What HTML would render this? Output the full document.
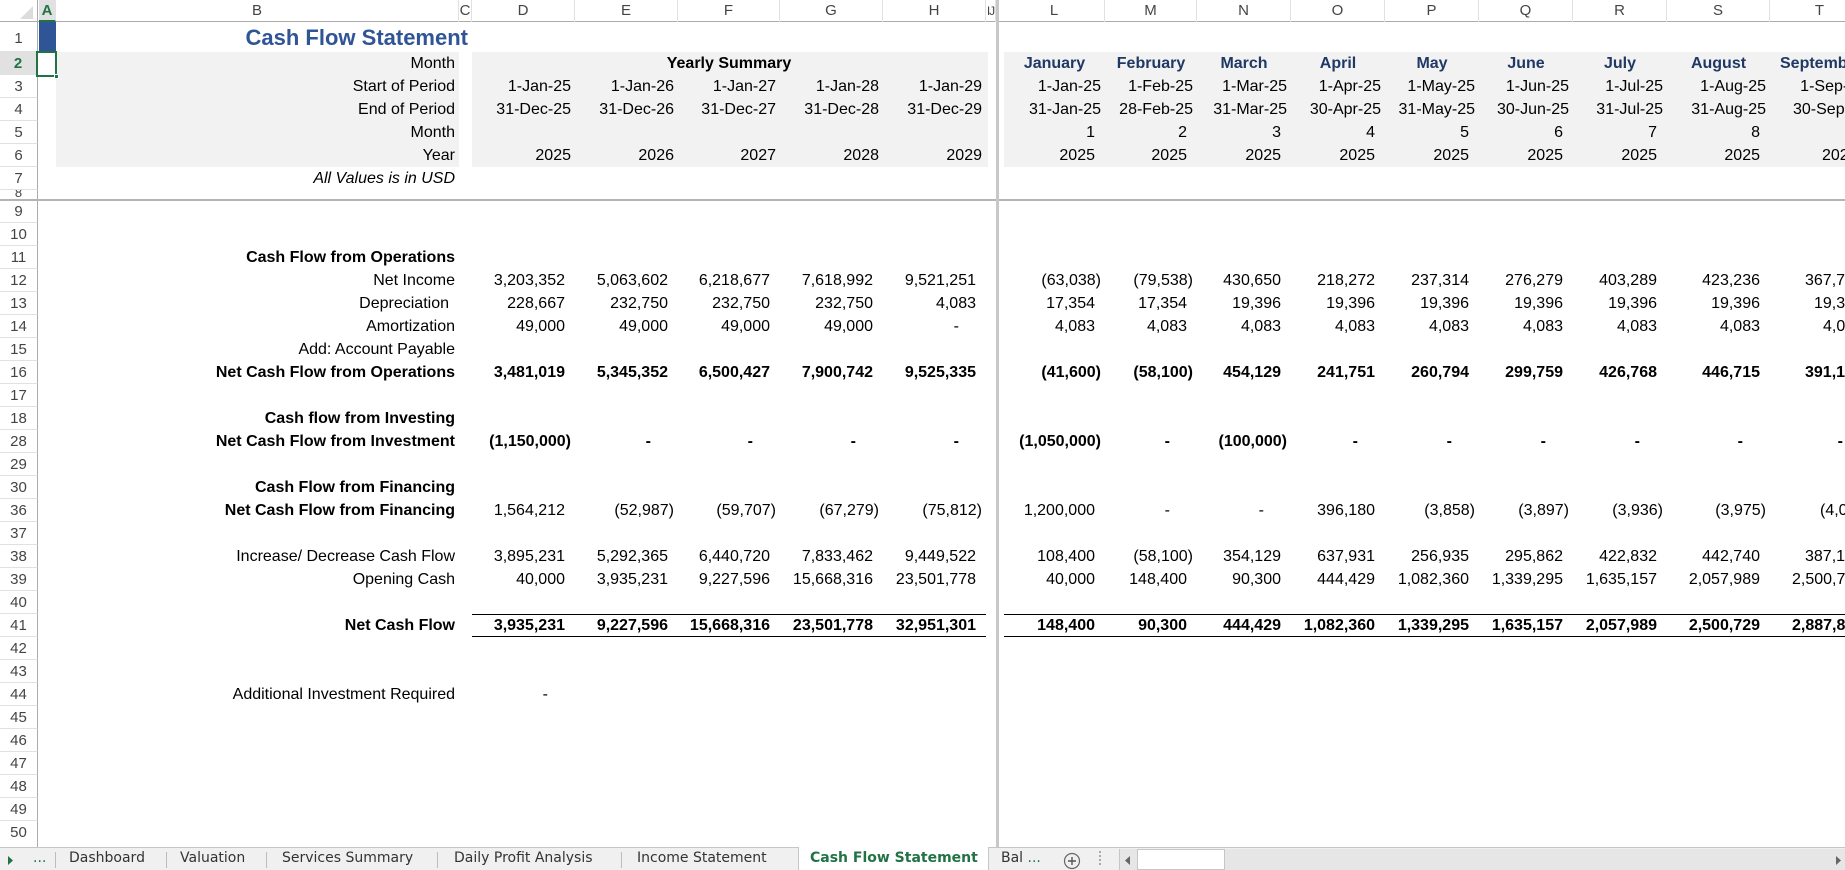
<!DOCTYPE html>
<html><head><meta charset="utf-8"><style>
*{margin:0;padding:0;box-sizing:border-box}
body{width:1845px;height:870px;overflow:hidden;background:#fff;font-family:"Liberation Sans",Arial,sans-serif;font-size:16px;color:#000;position:relative}
.a{position:absolute;white-space:nowrap}
.r{position:absolute;left:0;width:1845px;height:23px}
.c{position:absolute;top:0;height:23px;line-height:23px;text-align:right;padding-right:10px;white-space:nowrap;overflow:visible}
.n{padding-right:4px}
.z{padding-right:27px}
.t{padding-right:4px}
.b{font-weight:bold}
.lb{left:56px;width:403px;padding-right:4px}
.D{left:472px;width:103px}.E{left:575px;width:103px}.F{left:678px;width:102px}.G{left:780px;width:103px}.H{left:883px;width:103px}
.L{left:1004px;width:101px}.M{left:1105px;width:92px}.N{left:1197px;width:94px}.O{left:1291px;width:94px}.P{left:1385px;width:94px}.Q{left:1479px;width:94px}.R{left:1573px;width:94px}.S{left:1667px;width:103px}.T{left:1770px;width:100px}
.rh{position:absolute;left:0;width:38px;height:23px;line-height:23px;text-align:center;font-size:15px;color:#444;border-bottom:1px solid #e1e1e1;border-right:1px solid #ababab;background:#fff}
.ch{position:absolute;top:0;height:22px;line-height:22px;text-align:center;font-size:15px;color:#444;border-right:1px solid #e1e1e1}
.gray{position:absolute;background:#f2f2f2}
.mo{text-align:center;padding:0;color:#1f3864;font-weight:bold}
.tab{position:absolute;top:848px;height:22px;line-height:21px;font-family:"DejaVu Sans","Liberation Sans",sans-serif;font-size:14px;color:#333}
.sep{position:absolute;top:852px;width:1px;height:16px;background:#bdbdbd}
</style></head><body>

<div class="gray" style="left:56px;top:52px;width:403px;height:115px"></div>
<div class="gray" style="left:472px;top:52px;width:516px;height:115px"></div>
<div class="gray" style="left:1004px;top:52px;width:841px;height:115px"></div>

<div class="a" style="left:0;top:0;width:1845px;height:22px;border-bottom:1px solid #ababab;background:#fff"></div>
<div class="a" style="left:0;top:0;width:38px;height:22px;border-right:1px solid #ababab"></div>
<svg class="a" style="left:20px;top:6px" width="14" height="14"><polygon points="13,0 13,13 0,13" fill="#dcdcdc"/></svg>
<div class="ch" style="left:39px;width:17px;background:#e1e1e1;color:#217346;font-weight:bold;border-bottom:2px solid #217346">A</div>
<div class="ch" style="left:56px;width:403px">B</div>
<div class="ch" style="left:459px;width:13px">C</div>
<div class="ch D">D</div><div class="ch E">E</div><div class="ch F">F</div><div class="ch G">G</div><div class="ch H">H</div>
<div class="ch" style="left:986px;width:10px;font-size:12px;letter-spacing:-1px">IJ</div>
<div class="ch L">L</div><div class="ch M">M</div><div class="ch N">N</div><div class="ch O">O</div><div class="ch P">P</div><div class="ch Q">Q</div><div class="ch R">R</div><div class="ch S">S</div><div class="ch T">T</div>

<div class="rh" style="top:22px;height:30px;line-height:34px">1</div>
<div class="rh" style="top:52px;background:#e1e1e1;color:#217346;font-weight:bold;border-right:2px solid #217346">2</div>
<div class="rh" style="top:75px">3</div><div class="rh" style="top:98px">4</div><div class="rh" style="top:121px">5</div><div class="rh" style="top:144px">6</div><div class="rh" style="top:167px">7</div>
<div class="rh" style="top:190px;height:10px;line-height:6px;overflow:hidden;font-size:13px">8</div>
<div class="rh" style="top:200px">9</div><div class="rh" style="top:223px">10</div><div class="rh" style="top:246px">11</div><div class="rh" style="top:269px">12</div><div class="rh" style="top:292px">13</div><div class="rh" style="top:315px">14</div><div class="rh" style="top:338px">15</div><div class="rh" style="top:361px">16</div><div class="rh" style="top:384px">17</div><div class="rh" style="top:407px">18</div><div class="rh" style="top:430px">28</div><div class="rh" style="top:453px">29</div><div class="rh" style="top:476px">30</div><div class="rh" style="top:499px">36</div><div class="rh" style="top:522px">37</div><div class="rh" style="top:545px">38</div><div class="rh" style="top:568px">39</div><div class="rh" style="top:591px">40</div><div class="rh" style="top:614px">41</div><div class="rh" style="top:637px">42</div><div class="rh" style="top:660px">43</div><div class="rh" style="top:683px">44</div><div class="rh" style="top:706px">45</div><div class="rh" style="top:729px">46</div><div class="rh" style="top:752px">47</div><div class="rh" style="top:775px">48</div><div class="rh" style="top:798px">49</div><div class="rh" style="top:821px;height:27px">50</div>

<div class="a" style="left:39px;top:22px;width:17px;height:30px;background:#2f5597"></div>
<div class="a" style="left:36px;top:51px;width:21px;height:26px;border:2px solid #217346"></div>
<div class="a" style="left:54px;top:74px;width:5px;height:5px;background:#217346;border:1px solid #fff"></div>

<div class="a b" style="left:232px;top:23px;width:236px;text-align:right;font-size:22px;line-height:30px;color:#2f5597">Cash Flow Statement</div>

<div class="r" style="top:52px">
<div class="c lb">Month</div>
<div class="c b" style="left:472px;width:514px;text-align:center;padding:0">Yearly Summary</div>
<div class="c L mo">January</div><div class="c M mo">February</div><div class="c N mo">March</div><div class="c O mo">April</div><div class="c P mo">May</div><div class="c Q mo">June</div><div class="c R mo">July</div><div class="c S mo">August</div><div class="c T mo" style="text-align:left;padding-left:10px">September</div>
</div>
<div class="r" style="top:75px">
<div class="c lb">Start of Period</div>
<div class="c D t">1-Jan-25</div><div class="c E t">1-Jan-26</div><div class="c F t">1-Jan-27</div><div class="c G t">1-Jan-28</div><div class="c H t">1-Jan-29</div>
<div class="c L t">1-Jan-25</div><div class="c M t">1-Feb-25</div><div class="c N t">1-Mar-25</div><div class="c O t">1-Apr-25</div><div class="c P t">1-May-25</div><div class="c Q t">1-Jun-25</div><div class="c R t">1-Jul-25</div><div class="c S t">1-Aug-25</div><div class="c T t">1-Sep-25</div>
</div>
<div class="r" style="top:98px">
<div class="c lb">End of Period</div>
<div class="c D t">31-Dec-25</div><div class="c E t">31-Dec-26</div><div class="c F t">31-Dec-27</div><div class="c G t">31-Dec-28</div><div class="c H t">31-Dec-29</div>
<div class="c L t">31-Jan-25</div><div class="c M t">28-Feb-25</div><div class="c N t">31-Mar-25</div><div class="c O t">30-Apr-25</div><div class="c P t">31-May-25</div><div class="c Q t">30-Jun-25</div><div class="c R t">31-Jul-25</div><div class="c S t">31-Aug-25</div><div class="c T" style="text-align:left;padding-left:23px">30-Sep-25</div>
</div>
<div class="r" style="top:121px">
<div class="c lb">Month</div>
<div class="c L">1</div><div class="c M">2</div><div class="c N">3</div><div class="c O">4</div><div class="c P">5</div><div class="c Q">6</div><div class="c R">7</div><div class="c S">8</div><div class="c T">9</div>
</div>
<div class="r" style="top:144px">
<div class="c lb">Year</div>
<div class="c D t">2025</div><div class="c E t">2026</div><div class="c F t">2027</div><div class="c G t">2028</div><div class="c H t">2029</div>
<div class="c L">2025</div><div class="c M">2025</div><div class="c N">2025</div><div class="c O">2025</div><div class="c P">2025</div><div class="c Q">2025</div><div class="c R">2025</div><div class="c S">2025</div><div class="c T" style="text-align:left;padding-left:52px">2025</div>
</div>
<div class="r" style="top:167px"><div class="c lb" style="font-style:italic">All Values is in USD</div></div>

<div class="r" style="top:246px"><div class="c lb b">Cash Flow from Operations</div></div>
<div class="r" style="top:269px"><div class="c lb">Net Income</div>
<div class="c D">3,203,352</div><div class="c E">5,063,602</div><div class="c F">6,218,677</div><div class="c G">7,618,992</div><div class="c H">9,521,251</div>
<div class="c L n">(63,038)</div><div class="c M n">(79,538)</div><div class="c N">430,650</div><div class="c O">218,272</div><div class="c P">237,314</div><div class="c Q">276,279</div><div class="c R">403,289</div><div class="c S">423,236</div><div class="c T" style="text-align:left;padding-left:35px">367,7</div></div>
<div class="r" style="top:292px"><div class="c lb" style="padding-right:10px">Depreciation</div>
<div class="c D">228,667</div><div class="c E">232,750</div><div class="c F">232,750</div><div class="c G">232,750</div><div class="c H">4,083</div>
<div class="c L">17,354</div><div class="c M">17,354</div><div class="c N">19,396</div><div class="c O">19,396</div><div class="c P">19,396</div><div class="c Q">19,396</div><div class="c R">19,396</div><div class="c S">19,396</div><div class="c T" style="text-align:left;padding-left:44px">19,3</div></div>
<div class="r" style="top:315px"><div class="c lb">Amortization</div>
<div class="c D">49,000</div><div class="c E">49,000</div><div class="c F">49,000</div><div class="c G">49,000</div><div class="c H z">-</div>
<div class="c L">4,083</div><div class="c M">4,083</div><div class="c N">4,083</div><div class="c O">4,083</div><div class="c P">4,083</div><div class="c Q">4,083</div><div class="c R">4,083</div><div class="c S">4,083</div><div class="c T" style="text-align:left;padding-left:53px">4,0</div></div>
<div class="r" style="top:338px"><div class="c lb">Add: Account Payable</div></div>
<div class="r b" style="top:361px"><div class="c lb">Net Cash Flow from Operations</div>
<div class="c D">3,481,019</div><div class="c E">5,345,352</div><div class="c F">6,500,427</div><div class="c G">7,900,742</div><div class="c H">9,525,335</div>
<div class="c L n">(41,600)</div><div class="c M n">(58,100)</div><div class="c N">454,129</div><div class="c O">241,751</div><div class="c P">260,794</div><div class="c Q">299,759</div><div class="c R">426,768</div><div class="c S">446,715</div><div class="c T" style="text-align:left;padding-left:35px">391,1</div></div>
<div class="r b" style="top:407px"><div class="c lb">Cash flow from Investing</div></div>
<div class="r b" style="top:430px"><div class="c lb">Net Cash Flow from Investment</div>
<div class="c D n">(1,150,000)</div><div class="c E z">-</div><div class="c F z">-</div><div class="c G z">-</div><div class="c H z">-</div>
<div class="c L n">(1,050,000)</div><div class="c M z">-</div><div class="c N n">(100,000)</div><div class="c O z">-</div><div class="c P z">-</div><div class="c Q z">-</div><div class="c R z">-</div><div class="c S z">-</div><div class="c T z">-</div></div>
<div class="r b" style="top:476px"><div class="c lb">Cash Flow from Financing</div></div>
<div class="r" style="top:499px"><div class="c lb b">Net Cash Flow from Financing</div>
<div class="c D">1,564,212</div><div class="c E n">(52,987)</div><div class="c F n">(59,707)</div><div class="c G n">(67,279)</div><div class="c H n">(75,812)</div>
<div class="c L">1,200,000</div><div class="c M z">-</div><div class="c N z">-</div><div class="c O">396,180</div><div class="c P n">(3,858)</div><div class="c Q n">(3,897)</div><div class="c R n">(3,936)</div><div class="c S n">(3,975)</div><div class="c T" style="text-align:left;padding-left:50px">(4,0</div></div>
<div class="r" style="top:545px"><div class="c lb">Increase/ Decrease Cash Flow</div>
<div class="c D">3,895,231</div><div class="c E">5,292,365</div><div class="c F">6,440,720</div><div class="c G">7,833,462</div><div class="c H">9,449,522</div>
<div class="c L">108,400</div><div class="c M n">(58,100)</div><div class="c N">354,129</div><div class="c O">637,931</div><div class="c P">256,935</div><div class="c Q">295,862</div><div class="c R">422,832</div><div class="c S">442,740</div><div class="c T" style="text-align:left;padding-left:35px">387,1</div></div>
<div class="r" style="top:568px"><div class="c lb">Opening Cash</div>
<div class="c D">40,000</div><div class="c E">3,935,231</div><div class="c F">9,227,596</div><div class="c G">15,668,316</div><div class="c H">23,501,778</div>
<div class="c L">40,000</div><div class="c M">148,400</div><div class="c N">90,300</div><div class="c O">444,429</div><div class="c P">1,082,360</div><div class="c Q">1,339,295</div><div class="c R">1,635,157</div><div class="c S">2,057,989</div><div class="c T" style="text-align:left;padding-left:22px">2,500,7</div></div>
<div class="a" style="left:472px;top:614px;width:514px;height:23px;border-top:1px solid #000;border-bottom:1px solid #000"></div>
<div class="a" style="left:1004px;top:614px;width:841px;height:23px;border-top:1px solid #000;border-bottom:1px solid #000"></div>
<div class="r b" style="top:614px"><div class="c lb">Net Cash Flow</div>
<div class="c D">3,935,231</div><div class="c E">9,227,596</div><div class="c F">15,668,316</div><div class="c G">23,501,778</div><div class="c H">32,951,301</div>
<div class="c L">148,400</div><div class="c M">90,300</div><div class="c N">444,429</div><div class="c O">1,082,360</div><div class="c P">1,339,295</div><div class="c Q">1,635,157</div><div class="c R">2,057,989</div><div class="c S">2,500,729</div><div class="c T" style="text-align:left;padding-left:22px">2,887,8</div></div>
<div class="r" style="top:683px"><div class="c lb">Additional Investment Required</div><div class="c D z">-</div></div>

<div class="a" style="left:0;top:199px;width:1845px;height:2px;background:#b4b4b4"></div>
<div class="a" style="left:996px;top:0;width:3px;height:848px;background:#c8c8c8"></div>

<div class="a" style="left:0;top:847px;width:1845px;height:23px;background:#f0f0f0;border-top:1px solid #c6c6c6"></div>
<svg class="a" style="left:8px;top:856px" width="6" height="9"><polygon points="0,0 5,4.5 0,9" fill="#217346"/></svg>
<div class="tab" style="left:33px;color:#217346">...</div>
<div class="sep" style="left:55px"></div>
<div class="tab" style="left:69px">Dashboard</div>
<div class="sep" style="left:166px"></div>
<div class="tab" style="left:180px">Valuation</div>
<div class="sep" style="left:266px"></div>
<div class="tab" style="left:282px">Services Summary</div>
<div class="sep" style="left:437px"></div>
<div class="tab" style="left:454px">Daily Profit Analysis</div>
<div class="sep" style="left:621px"></div>
<div class="tab" style="left:637px">Income Statement</div>
<div class="a" style="left:798px;top:847px;width:191px;height:23px;background:#fff;border-left:1px solid #c6c6c6;border-right:1px solid #c6c6c6"></div>
<div class="tab" style="left:810px;color:#217346;font-weight:bold">Cash Flow Statement</div>
<div class="tab" style="left:1001px">Bal<span style="color:#217346"> ...</span></div>
<svg class="a" style="left:1063px;top:852px" width="18" height="18"><circle cx="9" cy="9" r="7.5" fill="none" stroke="#666" stroke-width="1.2"/><path d="M9 5v8M5 9h8" stroke="#555" stroke-width="1.4"/></svg>
<div class="a" style="left:1099px;top:851px;width:2px;height:14px;border-left:2px dotted #aaa"></div>
<div class="a" style="left:1119px;top:849px;width:726px;height:21px;background:#e6e6e6;border-left:1px solid #c6c6c6"></div>
<svg class="a" style="left:1125px;top:856px" width="5" height="9"><polygon points="5,0 0,4.5 5,9" fill="#666"/></svg>
<div class="a" style="left:1137px;top:849px;width:88px;height:21px;background:#fff;border:1px solid #c6c6c6"></div>
<svg class="a" style="left:1836px;top:856px" width="5" height="9"><polygon points="0,0 5,4.5 0,9" fill="#666"/></svg>
</body></html>
